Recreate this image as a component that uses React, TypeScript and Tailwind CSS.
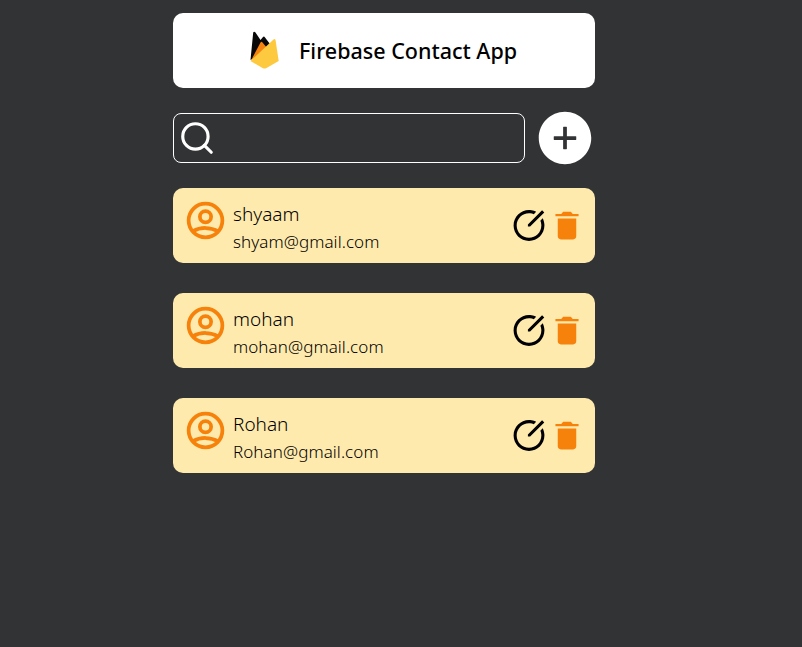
import { FiSearch } from "react-icons/fi";
import { AiFillPlusCircle } from "react-icons/ai";
import { HiOutlineUserCircle } from "react-icons/hi";
import { RiEditCircleLine } from "react-icons/ri";
import { IoMdTrash } from "react-icons/io";

type Contact = { name: string; email: string };

const contacts: Contact[] = [
  { name: "shyaam", email: "shyam@gmail.com" },
  { name: "mohan", email: "mohan@gmail.com" },
  { name: "Rohan", email: "Rohan@gmail.com" },
];

function FirebaseLogo() {
  return (
    <svg width="29" height="38" viewBox="0 0 29 38" className="mb-px shrink-0">
      <path d="M0.5 29 L3.200 1.500 Q4 0 5.500 1.500 L10.500 9 L13 6 Q14 5 15 6.500 L20 13 L12 22 Z" fill="#080808" />
      <path d="M1 29.500 L10.500 11.500 Q11.500 10 12.500 11.500 L18 18 Z" fill="#f5820d" />
      <path d="M0.500 30 L23.500 8.500 Q25.200 7.300 25.600 9.500 L28.700 30 L16.500 37 Q14.500 38 12.500 37 Z" fill="#fdca3f" />
    </svg>
  );
}

function ContactCard({ contact }: { contact: Contact }) {
  return (
    <li className="flex h-[75px] items-center rounded-[10px] bg-[#ffeaae] pr-[9px] pl-[10px]">
      <HiOutlineUserCircle className="mb-[10px] size-[45px] shrink-0 text-[#f6820c]" />
      <div className="ml-[5px] flex-1 pt-[3px] whitespace-nowrap text-black">
        <h2 className="text-[19px] leading-[28px] font-light">{contact.name}</h2>
        <p className="text-[17px] leading-[27px] font-light tracking-[0.07px]">{contact.email}</p>
      </div>
      <RiEditCircleLine className="h-[37px] w-[38px] text-black" />
      <IoMdTrash className="h-[37px] w-[38px] text-[#f6820c]" />
    </li>
  );
}

export default function App() {
  return (
    <div className="min-h-screen bg-[#323334] pt-[13px] font-['Noto_Sans','Open_Sans',sans-serif]">
      <main className="ml-[173px] w-[422px]">
        <header className="flex h-[75px] items-center rounded-[10px] bg-white pl-[77px]">
          <FirebaseLogo />
          <h1 className="ml-[20px] whitespace-nowrap pt-[2px] text-[21.5px] font-medium text-black">Firebase Contact App</h1>
        </header>
        <div className="mt-[20px] flex h-[60px] items-center">
          <label className="flex h-[50px] w-[352px] items-center rounded-[8px] border border-white pl-[4px]">
            <FiSearch className="mb-px size-[38px] text-white" />
            <input className="w-[290px] bg-transparent text-white outline-none" aria-label="Search" />
          </label>
          <AiFillPlusCircle className="ml-[10px] size-[60px] shrink-0 text-white" />
        </div>
        <ul className="mt-[20px] flex flex-col gap-[30px]">
          {contacts.map((contact) => (
            <ContactCard key={contact.email} contact={contact} />
          ))}
        </ul>
      </main>
    </div>
  );
}
